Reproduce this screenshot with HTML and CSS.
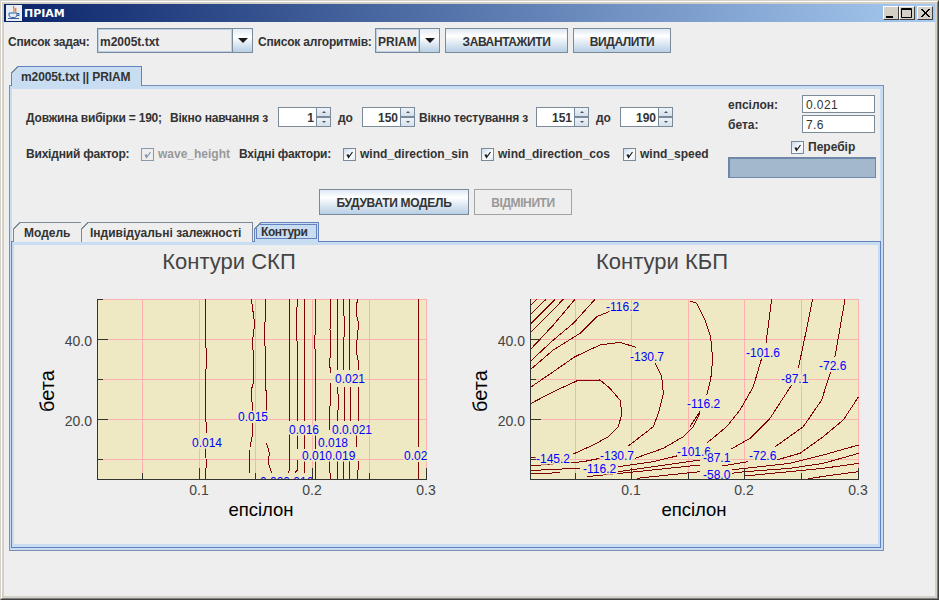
FILE: index.html
```html
<!DOCTYPE html>
<html lang="uk">
<head>
    <meta charset="UTF-8">
    <title>ПРІАМ</title>
    <link rel="stylesheet" href="styles.css">
</head>
<body>
<div class="window">
    <div class="window-inner">
        <div class="titlebar">
            <svg class="app-icon" width="16" height="16" viewBox="0 0 16 16">
                <rect x="0" y="0" width="16" height="16" fill="#e8ecf4"/>
                <path d="M8 1 C6 3 10 4 7.500 7 M10 3 C9 4.500 10.500 5 9.500 7" fill="none" stroke="#e8701a" stroke-width="1.200"/>
                <path d="M3 8 H11 V10 C11 12 9.500 12.500 7 12.500 C4.500 12.500 3 12 3 10 Z" fill="none" stroke="#33609a"/>
                <path d="M11 8.500 H13 V10.500 H11 M2 13.500 H13" fill="none" stroke="#33609a"/>
            </svg>
            <span class="title-text">ПРІАМ</span>
            <div class="win-buttons">
                <div class="win-btn"><svg width="14" height="12" viewBox="0 0 14 12"><rect x="2" y="9" width="7" height="2" fill="#000"/></svg></div>
                <div class="win-btn"><svg width="14" height="12" viewBox="0 0 14 12"><path d="M1.500 1.500 H11.500 V10.500 H1.500 Z M1 2.500 H12" fill="none" stroke="#000"/></svg></div>
                <div class="win-btn win-btn-close"><svg width="14" height="12" viewBox="0 0 14 12"><path d="M3 2 L11 10 M4 2 L12 10 M11 2 L3 10 M12 2 L4 10" fill="none" stroke="#000"/></svg></div>
            </div>
        </div>

        <div class="content">
            <div class="toolbar">
                <span class="lbl-tasks">Список задач:</span>
                <div class="combo combo-tasks">
                    <div class="combo-field">m2005t.txt</div>
                    <div class="combo-arrow"><span class="arrow-down"></span></div>
                </div>
                <span class="lbl-algos">Список алгоритмів:</span>
                <div class="combo combo-algos">
                    <div class="combo-field">PRIAM</div>
                    <div class="combo-arrow"><span class="arrow-down"></span></div>
                </div>
                <div class="btn btn-load">ЗАВАНТАЖИТИ</div>
                <div class="btn btn-delete">ВИДАЛИТИ</div>
            </div>

            <div class="main-tabs">
                <div class="tab tab-main">m2005t.txt || PRIAM</div>
            </div>

            <div class="tab-panel">
                <div class="settings">
                    <div class="settings-top">
                        <div class="params">
                            <div class="param-row">
                                <span class="w-len">Довжина вибірки = 190;</span>
                                <span class="w-train">Вікно навчання з</span>
                                <div class="spinner">
                                    <div class="spinner-field">1</div>
                                    <div class="spinner-btns"><div class="spin-btn"><span class="spin-up"></span></div><div class="spin-btn"><span class="spin-down"></span></div></div>
                                </div>
                                <span class="w-to">до</span>
                                <div class="spinner">
                                    <div class="spinner-field">150</div>
                                    <div class="spinner-btns"><div class="spin-btn"><span class="spin-up"></span></div><div class="spin-btn"><span class="spin-down"></span></div></div>
                                </div>
                                <span class="w-test">Вікно тестування з</span>
                                <div class="spinner">
                                    <div class="spinner-field">151</div>
                                    <div class="spinner-btns"><div class="spin-btn"><span class="spin-up"></span></div><div class="spin-btn"><span class="spin-down"></span></div></div>
                                </div>
                                <span class="w-to">до</span>
                                <div class="spinner">
                                    <div class="spinner-field">190</div>
                                    <div class="spinner-btns"><div class="spin-btn"><span class="spin-up"></span></div><div class="spin-btn"><span class="spin-down"></span></div></div>
                                </div>
                            </div>
                            <div class="param-row factors">
                                <span class="w-out">Вихідний фактор:</span>
                                <label class="check check-disabled w-wave">
                                    <span class="box"><svg width="11" height="11" viewBox="0 0 11 11"><path d="M3 5.500 L4.500 8.500 L8.500 3 M4 5.500 L5 7.500" fill="none" stroke="#8195ab" stroke-width="1.200"/></svg></span>wave_height
                                </label>
                                <span class="w-in">Вхідні фактори:</span>
                                <label class="check w-sin">
                                    <span class="box"><svg width="11" height="11" viewBox="0 0 11 11"><path d="M3 5.500 L4.500 8.500 L8.500 3 M4 5.500 L5 7.500" fill="none" stroke="#1c1c1c" stroke-width="1.200"/></svg></span>wind_direction_sin
                                </label>
                                <label class="check w-cos">
                                    <span class="box"><svg width="11" height="11" viewBox="0 0 11 11"><path d="M3 5.500 L4.500 8.500 L8.500 3 M4 5.500 L5 7.500" fill="none" stroke="#1c1c1c" stroke-width="1.200"/></svg></span>wind_direction_cos
                                </label>
                                <label class="check">
                                    <span class="box"><svg width="11" height="11" viewBox="0 0 11 11"><path d="M3 5.500 L4.500 8.500 L8.500 3 M4 5.500 L5 7.500" fill="none" stroke="#1c1c1c" stroke-width="1.200"/></svg></span>wind_speed
                                </label>
                            </div>
                        </div>

                        <div class="search-box">
                            <div class="search-row"><span class="search-lbl">епсілон:</span><div class="text-input">0.021</div></div>
                            <div class="search-row"><span class="search-lbl">бета:</span><div class="text-input">7.6</div></div>
                            <label class="check check-search">
                                <span class="box"><svg width="11" height="11" viewBox="0 0 11 11"><path d="M3 5.500 L4.500 8.500 L8.500 3 M4 5.500 L5 7.500" fill="none" stroke="#1c1c1c" stroke-width="1.200"/></svg></span>Перебір
                            </label>
                            <div class="progress"></div>
                        </div>
                    </div>

                    <div class="actions">
                        <div class="btn btn-build">БУДУВАТИ МОДЕЛЬ</div>
                        <div class="btn btn-cancel">ВІДМІНИТИ</div>
                    </div>

                    <div class="inner-tabs">
                        <div class="tab tab-model">Модель</div>
                        <div class="tab tab-deps">Індивідуальні залежності</div>
                        <div class="tab tab-contours"><span class="tab-focus">Контури</span></div>
                    </div>
                </div>

                <div class="inner-panel">
                    <!-- viewBox is in window pixels, so the plots can be read straight off the screen -->
                    <svg class="charts" width="864" height="299" viewBox="14 245 864 299">
                        <defs>
                            <clipPath id="clipLeft"><rect x="97" y="299" width="330" height="180"/></clipPath>
                            <clipPath id="clipRight"><rect x="530" y="299" width="329" height="180"/></clipPath>
                        </defs>

                        <!-- left plot -->
                        <text class="chart-title" x="229" y="269">Контури СКП</text>
                        <rect class="plot-bg" x="97" y="299" width="330" height="180"/>
                        <path class="grid" d="M142.500 299V479 M199.500 299V479 M255.500 299V479 M312.500 299V479 M369.500 299V479 M426.500 299V479 M97 299.500H427 M97 339.500H427 M97 379.500H427 M97 419.500H427 M97 459.500H427"/>
                        <g class="contours" transform="translate(250 290) scale(0.3333)">
                            <polyline points="4,28 14,100 8,150 12,270 4,300 8,370"/>
                            <polyline points="8,400 8,430 0,470"/>
                            <polyline points="48,28 44,120 48,300 50,365"/>
                            <polyline points="50,460 58,490 55,520 65,548"/>
                            <polyline points="118,28 118,392"/>
                            <polyline points="118,432 118,540 115,548"/>
                            <polyline points="142,28 138,130 142,160 142,392"/>
                            <polyline points="142,430 142,478"/>
                            <polyline points="142,510 142,540 135,548"/>
                            <polyline points="163,28 163,392"/>
                            <polyline points="163,432 163,478"/>
                            <polyline points="163,512 163,548"/>
                            <polyline points="197,28 197,120 193,150 197,200 197,392"/>
                            <polyline points="197,432 197,478"/>
                            <polyline points="197,512 197,568"/>
                            <polyline points="241,28 243,50 240,120 243,180 238,220 243,250"/>
                            <polyline points="243,280 240,350 238,392 238,420"/>
                            <polyline points="240,512 240,548 243,568"/>
                            <polyline points="262,28 262,240"/>
                            <polyline points="262,290 266,330 262,392"/>
                            <polyline points="262,512 262,568"/>
                            <polyline points="280,28 283,100 280,240"/>
                            <polyline points="283,290 283,392"/>
                            <polyline points="280,512 280,568"/>
                            <polyline points="298,28 298,240"/>
                            <polyline points="302,290 302,392"/>
                            <polyline points="298,512 298,568"/>
                            <polyline points="322,28 318,70 326,100 318,180 326,220 324,240"/>
                            <polyline points="326,290 326,392"/>
                            <polyline points="320,432 320,470"/>
                            <polyline points="326,512 322,568"/>
                            <polyline points="505,28 505,470"/>
                            <polyline points="505,515 505,568"/>
                        </g>
                        <g class="contours" transform="translate(60 290) scale(0.3333)">
                            <polyline points="436,28 436,120 439,200 436,320 439,430"/>
                            <polyline points="436,472 439,520 436,567"/>
                            <polyline points="568,480 568,548"/>
                        </g>
                        <g class="labels" clip-path="url(#clipLeft)">
                            <text x="192" y="447">0.014</text>
                            <text x="238" y="421">0.015</text>
                            <text x="289" y="434">0.016</text>
                            <text x="332" y="434">0.0.021</text>
                            <text x="318" y="447">0.018</text>
                            <text x="302" y="460">0.010.019</text>
                            <text x="335" y="383">0.021</text>
                            <text x="404" y="460">0.02</text>
                            <text x="260" y="486">0.020.016</text>
                        </g>
                        <path class="axis" d="M97.500 299V479.500H427 M97 299.500H103 M97 339.500H108 M97 379.500H103 M97 419.500H108 M97 459.500H103 M142.500 479V473 M199.500 479V468 M255.500 479V473 M312.500 479V468 M369.500 479V473 M426.500 479V468"/>
                        <text class="tick-y" x="92" y="346">40.0</text>
                        <text class="tick-y" x="92" y="426">20.0</text>
                        <text class="tick-x" x="199" y="495">0.1</text>
                        <text class="tick-x" x="312" y="495">0.2</text>
                        <text class="tick-x" x="426" y="495">0.3</text>
                        <text class="axis-name" x="261" y="516">епсілон</text>
                        <text class="axis-name axis-name-y" transform="translate(54 391) rotate(-90)">бета</text>

                        <!-- right plot -->
                        <text class="chart-title" x="662" y="269">Контури КБП</text>
                        <rect class="plot-bg" x="530" y="299" width="329" height="180"/>
                        <path class="grid" d="M575.500 299V479 M631.500 299V479 M688.500 299V479 M744.500 299V479 M801.500 299V479 M858.500 299V479 M530 299.500H859 M530 339.500H859 M530 379.500H859 M530 419.500H859 M530 459.500H859"/>
                        <g class="contours" transform="translate(520 290) scale(0.3333)">
                            <polyline points="30,48 50,28"/>
                            <polyline points="30,75 78,28"/>
                            <polyline points="30,103 105,28"/>
                            <polyline points="30,130 130,28"/>
                            <polyline points="30,180 100,105 165,28"/>
                            <polyline points="30,215 100,150 160,100 225,28"/>
                            <polyline points="30,240 100,180 180,130 230,80 280,60"/>
                            <polyline points="30,293 100,245 165,200 240,165 300,157 348,172"/>
                            <polyline points="30,342 100,305 170,273 240,270 270,295 300,330 306,370 295,410 265,440 220,465 160,492"/>
                            <polyline points="405,220 425,260 430,310 415,370 400,410 325,468"/>
                            <polyline points="540,370 520,410 490,440 430,475 345,505"/>
                            <polyline points="30,503 48,503"/>
                            <polyline points="30,528 100,522 190,515 240,505"/>
                            <polyline points="30,542 100,538 180,535"/>
                            <polyline points="30,552 120,548"/>
                            <polyline points="295,530 400,515 470,498"/>
                            <polyline points="295,545 400,530 540,510"/>
                            <polyline points="200,560 350,545 540,525"/>
                            <polyline points="350,565 540,545"/>
                        </g>
                        <g class="contours" transform="translate(690 290) scale(0.3333)">
                            <polyline points="0,33 20,40 45,90 62,140 68,210 62,270 50,315"/>
                            <polyline points="30,365 0,410"/>
                            <polyline points="245,28 228,160"/>
                            <polyline points="215,205 190,290 150,360 110,410 52,458"/>
                            <polyline points="368,28 345,140 325,235"/>
                            <polyline points="305,285 240,385 180,445 122,478"/>
                            <polyline points="465,28 435,200"/>
                            <polyline points="422,245 395,330 340,410 256,470"/>
                            <polyline points="506,320 460,390 400,440 330,490 260,510"/>
                            <polyline points="175,515 95,528"/>
                            <polyline points="506,465 400,495 300,520 165,535 125,540"/>
                            <polyline points="506,490 400,520 300,535 165,545 125,550"/>
                            <polyline points="506,520 400,535 165,558"/>
                            <polyline points="506,545 430,555 355,566"/>
                        </g>
                        <g class="labels" clip-path="url(#clipRight)">
                            <text x="606" y="311">-116.2</text>
                            <text x="630" y="361">-130.7</text>
                            <text x="536" y="463">-145.2</text>
                            <text x="600" y="460">-130.7</text>
                            <text x="583" y="473">-116.2</text>
                            <text x="677" y="456">-101.6</text>
                            <text x="687" y="408">-116.2</text>
                            <text x="703" y="462">-87.1</text>
                            <text x="703" y="479">-58.0</text>
                            <text x="749" y="460">-72.6</text>
                            <text x="746" y="357">-101.6</text>
                            <text x="781" y="383">-87.1</text>
                            <text x="819" y="370">-72.6</text>
                        </g>
                        <path class="axis" d="M530.500 299V479.500H859 M530 339.500H541 M530 379.500H536 M530 419.500H541 M530 459.500H536 M575.500 479V473 M631.500 479V468 M688.500 479V473 M744.500 479V468 M801.500 479V473 M858.500 479V468"/>
                        <text class="tick-y" x="525" y="346">40.0</text>
                        <text class="tick-y" x="525" y="426">20.0</text>
                        <text class="tick-x" x="631" y="495">0.1</text>
                        <text class="tick-x" x="744" y="495">0.2</text>
                        <text class="tick-x" x="858" y="495">0.3</text>
                        <text class="axis-name" x="694" y="516">епсілон</text>
                        <text class="axis-name axis-name-y" transform="translate(487 391) rotate(-90)">бета</text>
                    </svg>
                </div>
            </div>
        </div>
    </div>
</div>
</body>
</html>
```

FILE: styles.css
```css
* {
    box-sizing: border-box;
}

body {
    margin: 0;
    background: #eeeeee;
    font-family: "Liberation Sans", Arial, sans-serif;
    font-size: 12px;
    font-weight: bold;
    color: #333333;
    white-space: nowrap;
}

.window {
    width: 939px;
    height: 600px;
    border: 1px solid;
    border-color: #d4d0c8 #404040 #404040 #d4d0c8;
    overflow: hidden;
}

.window-inner {
    height: 100%;
    border: 1px solid;
    border-color: #ffffff #808080 #808080 #ffffff;
    background: #d4d0c8;
    padding: 2px;
}

.titlebar {
    display: flex;
    align-items: center;
    height: 18px;
    padding: 0 2px;
    background: linear-gradient(to right, #0a246a, #a6caf0);
    color: #ffffff;
}

.app-icon {
    flex: none;
}

.title-text {
    margin-left: 2px;
    font-family: "DejaVu Sans", sans-serif;
    font-size: 11px;
}

.win-buttons {
    display: flex;
    margin-left: auto;
}

.win-btn {
    width: 16px;
    height: 14px;
    background: #d4d0c8;
    border: 1px solid;
    border-color: #ffffff #404040 #404040 #ffffff;
}

.win-btn svg {
    display: block;
}

.win-btn-close {
    margin-left: 2px;
}

.content {
    height: 574px;
    background: #eeeeee;
    padding: 6px 0 0 4px;
}

/* top row */
.toolbar {
    display: flex;
    align-items: center;
    height: 25px;
}

.lbl-tasks {
    width: 89px;
    padding-top: 2px;
    letter-spacing: -0.2px;
}

.lbl-algos {
    width: 117px;
    margin-left: 5px;
    padding-top: 2px;
    letter-spacing: -0.2px;
}

.combo {
    display: flex;
    height: 25px;
    border: 1px solid #7a8a99;
}

.combo-tasks {
    width: 156px;
}

.combo-algos {
    width: 65px;
}

.combo-field {
    flex: 1;
    padding: 5px 0 0 1px;
    background: #eeeeee;
    border: 1px solid #b8cfe5;
}

.combo-arrow {
    display: flex;
    align-items: center;
    justify-content: center;
    width: 20px;
    border-left: 1px solid #7a8a99;
    background: linear-gradient(to bottom, #e3ecf5, #ffffff 35%, #b8cfe5);
}

.arrow-down {
    width: 0;
    height: 0;
    border-left: 5px solid transparent;
    border-right: 5px solid transparent;
    border-top: 5px solid #1a1a1a;
}

.btn {
    display: flex;
    align-items: center;
    justify-content: center;
    height: 25px;
    padding-top: 2px;
    letter-spacing: -0.4px;
    border: 1px solid #7a8a99;
    background: linear-gradient(to bottom, #dde8f3, #ffffff 30%, #b8cfe5);
}

.btn-load {
    width: 123px;
    margin-left: 5px;
}

.btn-delete {
    width: 98px;
    margin-left: 5px;
}

/* tabs */
.main-tabs {
    display: flex;
    margin: 13px 0 0 3px;
    height: 19px;
    position: relative;
    z-index: 1;
}

.tab {
    position: relative;
    display: flex;
    align-items: center;
    height: 20px;
    border: 1px solid #7a8a99;
    border-bottom: none;
    background: #eeeeee;
}

.tab::before {
    content: "";
    position: absolute;
    top: -1px;
    left: -1px;
    width: 7px;
    height: 7px;
    background: linear-gradient(135deg, #eeeeee 46%, #7a8a99 46%, #7a8a99 58%, transparent 58%);
}

.tab-main {
    width: 131px;
    padding-left: 9px;
    letter-spacing: -0.1px;
    background: #c8ddf2;
    border-color: #6382bf;
}

.tab-panel {
    width: 875px;
    height: 466px;
    margin-left: 1px;
    border: 1px solid #7a8fb5;
    background: #c8ddf2;
    padding: 3px 0 2px 0;
}

.settings {
    height: 152px;
    background: #eeeeee;
    border-left: 2px solid #c8ddf2;
    border-right: 3px solid #c8ddf2;
}

.settings-top {
    display: flex;
    height: 95px;
}

.params {
    padding: 18px 0 0 14px;
    width: 716px;
}

.param-row {
    display: flex;
    align-items: center;
    height: 20px;
}

.param-row > span {
    padding-top: 2px;
    letter-spacing: -0.2px;
}

.factors {
    margin-top: 16px;
}

.w-len {
    width: 144px;
}

.w-train {
    width: 108px;
}

.w-to {
    width: 31px;
    padding-left: 7px;
}

.w-test {
    width: 121px;
    padding-left: 4px;
}

.w-out {
    width: 115px;
}

.w-wave {
    width: 98px;
}

.w-in {
    width: 104px;
}

.w-sin {
    width: 138px;
}

.w-cos {
    width: 142px;
}

.spinner {
    display: flex;
    width: 53px;
    height: 20px;
}

.spinner-field {
    width: 38px;
    padding: 3px 2px 0 0;
    text-align: right;
    font-size: 12px;
    background: #ffffff;
    border: 1px solid #7a8a99;
    border-right: none;
}

.spinner-btns {
    width: 15px;
}

.spin-btn {
    display: flex;
    align-items: center;
    justify-content: center;
    height: 10px;
    border: 1px solid #7a8a99;
    background: linear-gradient(to bottom, #eef3f8, #d3e0ed);
}

.spin-up,
.spin-down {
    width: 0;
    height: 0;
    border-left: 2px solid transparent;
    border-right: 2px solid transparent;
}

.spin-up {
    border-bottom: 2px solid #555555;
}

.spin-down {
    border-top: 2px solid #555555;
}

.check {
    display: flex;
    align-items: center;
    padding-top: 2px;
}

.box {
    display: block;
    width: 13px;
    height: 13px;
    margin-right: 4px;
    border: 1px solid #7a8a99;
    background: linear-gradient(135deg, #c8daec, #ffffff 60%, #dde8f3);
}

.box svg {
    display: block;
}

.check-disabled {
    color: #999999;
}

.check-disabled .box {
    border-color: #8a99a8;
    background: #eeeeee;
}

/* search parameters on the right */
.search-box {
    width: 148px;
    padding-top: 6px;
}

.search-row {
    display: flex;
    align-items: center;
    margin-bottom: 2px;
}

.search-lbl {
    width: 74px;
    padding-top: 2px;
}

.text-input {
    width: 73px;
    height: 18px;
    padding: 2px 0 0 3px;
    font-weight: normal;
    letter-spacing: 0.4px;
    background: #ffffff;
    border: 1px solid #7a8a99;
}

.check-search {
    height: 14px;
    margin: 6px 0 4px 63px;
}

.progress {
    height: 21px;
    border: 2px solid #7088a8;
    border-width: 2px 1px 1px 2px;
    background: #a3b8cc;
}

.actions {
    display: flex;
    gap: 5px;
    height: 26px;
    margin: 5px 0 0 307px;
}

.btn-build {
    width: 150px;
    height: 26px;
    letter-spacing: -0.3px;
}

.btn-cancel {
    width: 98px;
    height: 26px;
    color: #999999;
    border-color: #a3a3a3;
    background: #eeeeee;
}

.inner-tabs {
    display: flex;
    height: 19px;
    margin: 7px 0 0 1px;
    position: relative;
    z-index: 1;
}

.tab-model {
    width: 69px;
    padding-left: 10px;
}

.tab-deps {
    width: 171px;
    padding-left: 8px;
    border-left: none;
}

.tab-contours {
    width: 65px;
    margin-left: 1px;
    padding: 1px 1px 0;
    background: #c8ddf2;
    border-color: #6382bf;
}

.tab-focus {
    display: flex;
    align-items: center;
    width: 100%;
    height: 15px;
    padding-left: 4px;
    margin-bottom: 3px;
    letter-spacing: -0.4px;
    border: 1px solid #6382bf;
}

.inner-panel {
    width: 870px;
    height: 307px;
    margin-left: 1px;
    border: 1px solid #6382bf;
    background: #c8ddf2;
    padding: 3px 2px;
}

/* charts */
.charts {
    display: block;
    background: #eeeeee;
    font-weight: normal;
}

.plot-bg {
    fill: #eee9c2;
}

.grid {
    fill: none;
    stroke: #ffb0b0;
    stroke-width: 1;
    shape-rendering: crispEdges;
}

.axis {
    fill: none;
    stroke: #333333;
    stroke-width: 1;
    shape-rendering: crispEdges;
}

.contours polyline {
    fill: none;
    stroke: #800000;
    stroke-width: 1;
    vector-effect: non-scaling-stroke;
    shape-rendering: crispEdges;
}

.labels text {
    font-size: 12px;
    fill: #0000ff;
    stroke: #eee9c2;
    stroke-width: 3px;
    paint-order: stroke;
}

.chart-title {
    font-size: 22px;
    fill: #444444;
    text-anchor: middle;
}

.tick-y {
    font-size: 14px;
    fill: #444444;
    text-anchor: end;
}

.tick-x {
    font-size: 14px;
    fill: #444444;
    text-anchor: middle;
}

.axis-name {
    font-size: 18.500px;
    fill: #000000;
    text-anchor: middle;
}

.axis-name-y {
    font-size: 20px;
}
```
